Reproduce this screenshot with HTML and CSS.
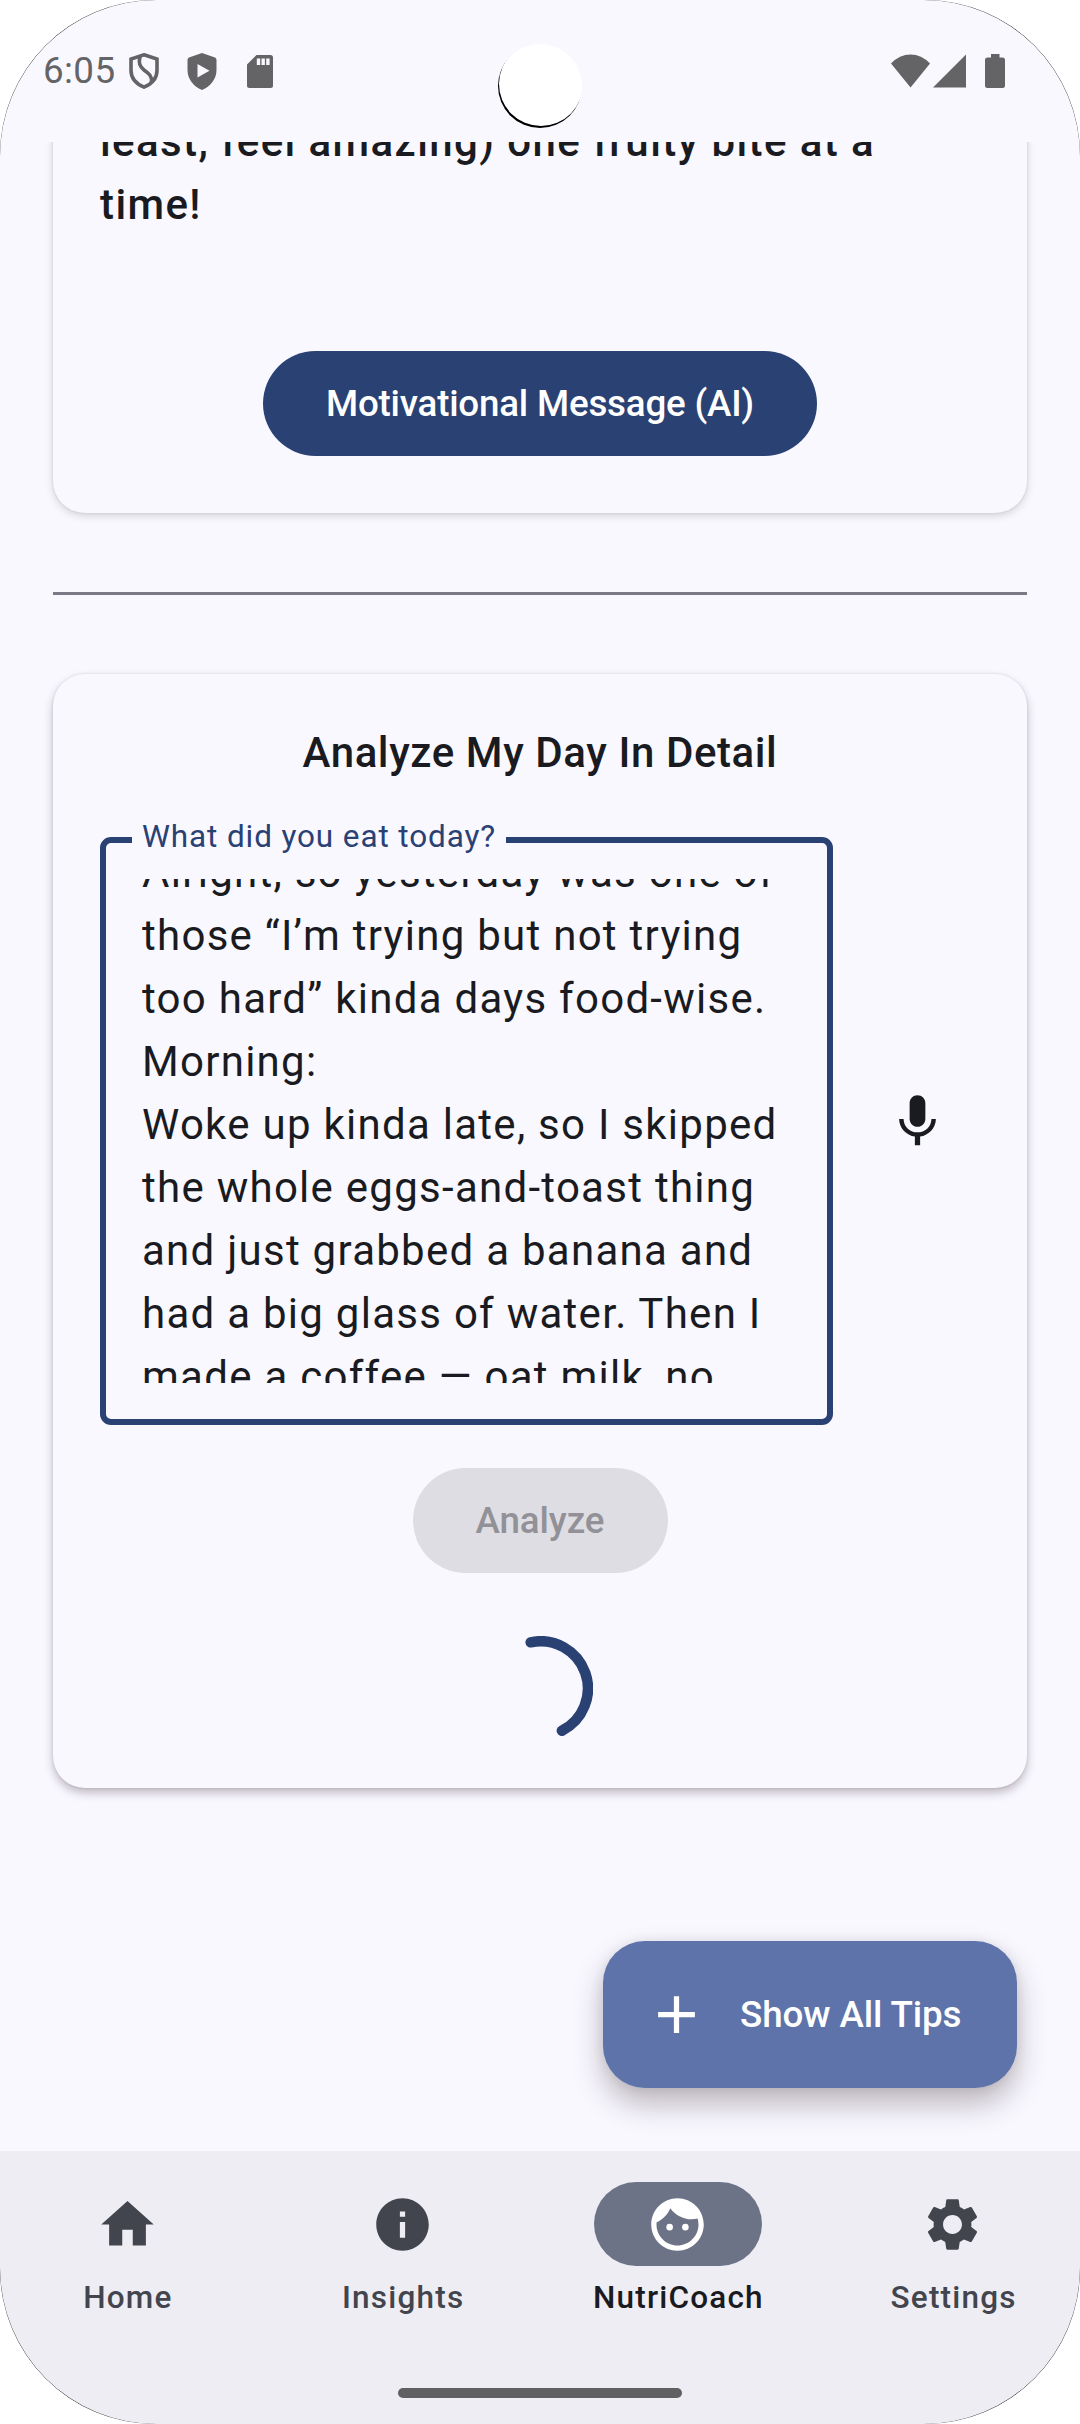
FILE: index.html
```html
<!DOCTYPE html>
<html lang="en">
<head>
<meta charset="utf-8">
<title>NutriCoach</title>
<link rel="stylesheet" href="styles.css">
</head>
<body>
<div class="screen">
  <header class="status">
    <div class="status-left">
      <span class="clock">6:05</span>
      <svg class="st-shield" viewBox="0 0 30 36"><path d="M15 1.8 28 6v11.5C28 25 22.500 31 15 34.200 7.500 31 2 25 2 17.500V6z" fill="none" stroke="currentColor" stroke-width="3.600"/><path d="M11 3C9.500 10 10.500 13.500 15 17 20 20.500 23 23 22.500 29" fill="none" stroke="currentColor" stroke-width="3.600"/></svg>
      <svg class="st-play" viewBox="0 0 30 37"><path fill-rule="evenodd" d="M15 0 28 4.500Q29.500 5 29.500 7v10C29.500 26 23.500 33.500 15 37 6.500 33.500.5 26 .5 17V7Q.5 5 2 4.500zM10.500 11v13.500L22.500 17.800z" fill="currentColor"/></svg>
      <svg class="st-card" viewBox="0 0 26 33"><path fill-rule="evenodd" d="M9.500 0H23.500Q26 0 26 2.500V30.500Q26 33 23.500 33H2.500Q0 33 0 30.500V9.500zM9.800 3.500V10h3.400V3.500zm4.700 0V10h3.400V3.500zm4.700 0V10h3.400V3.500z" fill="currentColor"/></svg>
    </div>
    <div class="status-right">
      <svg class="st-wifi" viewBox="0 0 39 34"><path d="M0 9.500Q8.500.5 19.500.5T39 9.500L19.500 33.500z" fill="currentColor"/></svg>
      <svg class="st-signal" viewBox="0 0 33 34"><path d="M33 .5V33.500H0z" fill="currentColor"/></svg>
      <svg class="st-battery" viewBox="0 0 20 34"><path d="M6 0h8.500v3.500H17.500Q20 3.500 20 6V31.500Q20 34 17.500 34H2.500Q0 34 0 31.500V6Q0 3.500 2.500 3.500H6z" fill="currentColor"/></svg>
    </div>
    <div class="camera"></div>
  </header>

  <main class="content">
    <section class="card card-message">
      <p class="message">least, feel amazing) one fruity bite at a<br>time!</p>
      <button class="btn btn-primary">Motivational Message (AI)</button>
    </section>

    <hr class="divider">

    <section class="card card-analyze">
      <h2 class="card-title">Analyze My Day In Detail</h2>
      <div class="input-row">
        <div class="field">
          <span class="field-label">What did you eat today?</span>
          <div class="field-view">
            <p class="field-text">Alright, so yesterday was one of<br>those “I’m trying but not trying<br>too hard” kinda days food-wise.<br>Morning:<br>Woke up kinda late, so I skipped<br>the whole eggs-and-toast thing<br>and just grabbed a banana and<br>had a big glass of water. Then I<br>made a coffee — oat milk, no</p>
          </div>
        </div>
        <svg class="icon mic" viewBox="0 0 24 24"><path d="M12 14c1.660 0 2.990-1.340 2.990-3L15 5c0-1.660-1.340-3-3-3S9 3.340 9 5v6c0 1.660 1.340 3 3 3zm5.300-3c0 3-2.540 5.100-5.300 5.100S6.700 14 6.700 11H5c0 3.410 2.720 6.230 6 6.720V21h2v-3.280c3.280-.48 6-3.300 6-6.720h-1.700z"/></svg>
      </div>
      <button class="btn btn-disabled" disabled>Analyze</button>
      <svg class="spinner" viewBox="0 0 105 105"><path d="M42.700 6.300A47.250 47.250 0 0 1 73.900 94.700" fill="none" stroke="#2a4173" stroke-width="10.500" stroke-linecap="round"/></svg>
    </section>

    <button class="fab">
      <svg class="icon" viewBox="0 0 24 24"><path d="M19 13h-6v6h-2v-6H5v-2h6V5h2v6h6v2z"/></svg>
      <span>Show All Tips</span>
    </button>
  </main>

  <nav class="nav">
    <div class="nav-items">
      <a class="nav-item"><span class="pill"><svg class="icon" viewBox="0 0 24 24"><path d="M10 20v-6h4v6h5v-8h3L12 3 2 12h3v8z"/></svg></span><span class="nav-label">Home</span></a>
      <a class="nav-item"><span class="pill"><svg class="icon" viewBox="0 0 24 24"><path d="M12 2C6.480 2 2 6.480 2 12s4.480 10 10 10 10-4.480 10-10S17.520 2 12 2zm1 15h-2v-6h2v6zm0-8h-2V7h2v2z"/></svg></span><span class="nav-label">Insights</span></a>
      <a class="nav-item active"><span class="pill"><svg class="icon" viewBox="0 0 24 24"><path fill-rule="evenodd" d="M12 2C6.480 2 2 6.480 2 12s4.480 10 10 10 10-4.480 10-10S17.520 2 12 2zm0 18c-4.410 0-8-3.590-8-8 0-.29.02-.58.05-.86 2.360-1.050 4.230-2.980 5.210-5.370C11.070 8.330 14.050 10 17.420 10c.78 0 1.530-.09 2.250-.26.21.71.33 1.470.33 2.260 0 4.410-3.590 8-8 8z"/><circle cx="9" cy="13" r="1.250"/><circle cx="15" cy="13" r="1.250"/></svg></span><span class="nav-label">NutriCoach</span></a>
      <a class="nav-item"><span class="pill"><svg class="icon" viewBox="0 0 24 24"><path d="M19.140 12.940c.04-.3.06-.61.06-.94 0-.32-.02-.64-.07-.94l2.030-1.580c.18-.14.23-.41.12-.61l-1.920-3.320c-.12-.22-.37-.29-.59-.22l-2.390.96c-.5-.38-1.030-.7-1.620-.94l-.36-2.540c-.04-.24-.24-.41-.48-.41h-3.840c-.24 0-.43.17-.47.41l-.36 2.540c-.59.24-1.130.57-1.620.94l-2.390-.96c-.22-.08-.47 0-.59.22L2.740 8.870c-.12.21-.08.47.12.61l2.030 1.580c-.05.3-.09.63-.09.94s.02.64.07.94l-2.030 1.580c-.18.14-.23.41-.12.61l1.920 3.320c.12.22.37.29.59.22l2.390-.96c.5.38 1.030.7 1.620.94l.36 2.540c.05.24.24.41.48.41h3.840c.24 0 .44-.17.47-.41l.36-2.540c.59-.24 1.130-.56 1.620-.94l2.390.96c.22.08.47 0 .59-.22l1.920-3.320c.12-.22.07-.47-.12-.61l-2.010-1.580zM12 15.600c-1.980 0-3.600-1.620-3.600-3.600s1.620-3.600 3.600-3.600 3.600 1.620 3.600 3.600-1.620 3.600-3.600 3.600z"/></svg></span><span class="nav-label">Settings</span></a>
    </div>
    <div class="handle"></div>
  </nav>
</div>
</body>
</html>
```
FILE: styles.css
```css
* { box-sizing: border-box; }

body {
  margin: 0;
  background: #fff;
  font-family: Roboto, "Liberation Sans", sans-serif;
  color: #1a1b20;
}

.screen {
  position: relative;
  display: flex;
  flex-direction: column;
  width: 1080px;
  height: 2424px;
  overflow: hidden;
  border-radius: 155px;
  background: #f9f8ff;
}

/* hairline that shows only along the rounded corners */
.screen::after {
  content: "";
  position: absolute;
  inset: -1px;
  border: 1px solid rgba(0, 0, 0, 0.7);
  border-radius: 157.5px;
  pointer-events: none;
}

.icon {
  display: block;
  width: 63px;
  height: 63px;
  fill: currentColor;
}

/* status bar */
.status {
  position: relative;
  display: flex;
  flex: none;
  justify-content: space-between;
  height: 142px;
  padding: 48px 75px 0 43px;
  color: #646466;
}

.status-left,
.status-right {
  display: flex;
  align-items: center;
  height: 46px;
}

.clock {
  width: 73px;
  font-size: 36.75px;
  line-height: 46px;
  letter-spacing: 0.4px;
  white-space: nowrap;
}

.st-shield { width: 30px; height: 36px; margin-left: 13px; }
.st-play { width: 30px; height: 37px; margin-left: 28px; }
.st-card { width: 26px; height: 33px; margin-left: 30px; }
.st-wifi { width: 39px; height: 34px; }
.st-signal { width: 33px; height: 34px; margin-left: 3px; }
.st-battery { width: 20px; height: 34px; margin-left: 19px; }

.camera {
  position: absolute;
  left: 498px;
  top: 44px;
  width: 84px;
  height: 84px;
  border-radius: 50%;
  background: #fff;
  box-shadow: inset 1px -2px 0 #000;
}

/* scrolling content */
.content {
  position: relative;
  display: flex;
  flex: none;
  flex-direction: column;
  height: 2009px;
  padding: 0 53px;
  overflow: hidden;
}

.card {
  display: flex;
  flex: none;
  flex-direction: column;
  align-items: center;
  padding: 47px;
  border-radius: 32px;
  background: #f9f8ff;
  box-shadow: 0 0 3px rgba(0, 0, 0, 0.1), 0 3px 8px rgba(0, 0, 0, 0.15);
}

.card-message {
  margin-top: -79px;
  padding-bottom: 57px;
}

.message {
  align-self: stretch;
  margin: 0 0 115px;
  font-size: 42px;
  font-weight: 500;
  line-height: 63px;
  letter-spacing: 1.4px;
  white-space: nowrap;
}

.btn {
  height: 105px;
  padding: 0;
  border: 0;
  border-radius: 53px;
  font-family: inherit;
  font-size: 36.75px;
  font-weight: 500;
  white-space: nowrap;
}

.btn-primary {
  width: 554px;
  background: #2a4173;
  color: #fff;
  letter-spacing: -0.2px;
}

.btn-disabled {
  width: 255px;
  background: #dedde3;
  color: #929197;
  letter-spacing: -0.1px;
}

.divider {
  flex: none;
  width: 100%;
  height: 3px;
  margin: 79px 0;
  border: 0;
  background: #7a7985;
}

.card-analyze {
  height: 1114px;
  box-shadow: 0 0 3px rgba(0, 0, 0, 0.1), 0 5px 10px rgba(40, 20, 30, 0.27);
}

.card-title {
  margin: 0 0 53px;
  font-size: 42px;
  font-weight: 500;
  line-height: 63px;
  letter-spacing: 0.59px;
}

.input-row {
  display: flex;
  align-self: stretch;
  margin-bottom: 43px;
}

.field {
  position: relative;
  width: 733px;
  height: 588px;
  padding: 36px 36px;
  border: 6px solid #2a4173;
  border-radius: 11px;
}

.field-label {
  position: absolute;
  left: 26px;
  top: -27px;
  width: 374px;
  padding: 0 10px;
  background: #f9f8ff;
  color: #2a4173;
  font-size: 31.5px;
  line-height: 42px;
  letter-spacing: 0.88px;
  white-space: nowrap;
}

.field-view {
  height: 504px;
  overflow: hidden;
}

.field-text {
  margin: -38px 0 0;
  font-size: 42px;
  line-height: 63px;
  letter-spacing: 1.27px;
  white-space: nowrap;
}

.mic {
  align-self: flex-start;
  margin: 253px 0 0 53px;
}

.spinner {
  width: 105px;
  height: 105px;
  margin-top: 63px;
}

.fab {
  position: absolute;
  left: 603px;
  top: 1799px;
  display: flex;
  align-items: center;
  gap: 32px;
  width: 414px;
  height: 147px;
  padding: 0 0 0 42px;
  border: 0;
  border-radius: 42px;
  background: #5e73aa;
  color: #fff;
  font-family: inherit;
  font-size: 36.75px;
  font-weight: 500;
  letter-spacing: -0.1px;
  white-space: nowrap;
  box-shadow: 0 0 12px rgba(0, 0, 0, 0.08), 0 16px 30px rgba(40, 20, 30, 0.29);
}

/* bottom navigation */
.nav {
  display: flex;
  flex: 1;
  flex-direction: column;
  align-items: center;
  background: #eeedf3;
}

.nav-items {
  display: grid;
  grid-template-columns: repeat(4, 1fr);
  gap: 21px;
  width: 100%;
  padding-top: 31px;
}

.nav-item {
  display: flex;
  flex-direction: column;
  align-items: center;
  gap: 11px;
  color: #43454e;
  font-size: 31.5px;
  font-weight: 500;
  line-height: 42px;
  letter-spacing: 1.2px;
}

.nav-label { padding-left: 1.5px; }

.pill {
  display: flex;
  align-items: center;
  justify-content: center;
  width: 168px;
  height: 84px;
  border-radius: 42px;
}

.active { color: #1a1b20; }
.active .pill { background: #6d7387; color: #fff; }

.handle {
  width: 284px;
  height: 10px;
  margin-top: 69px;
  border-radius: 5px;
  background: #605f61;
}
```
